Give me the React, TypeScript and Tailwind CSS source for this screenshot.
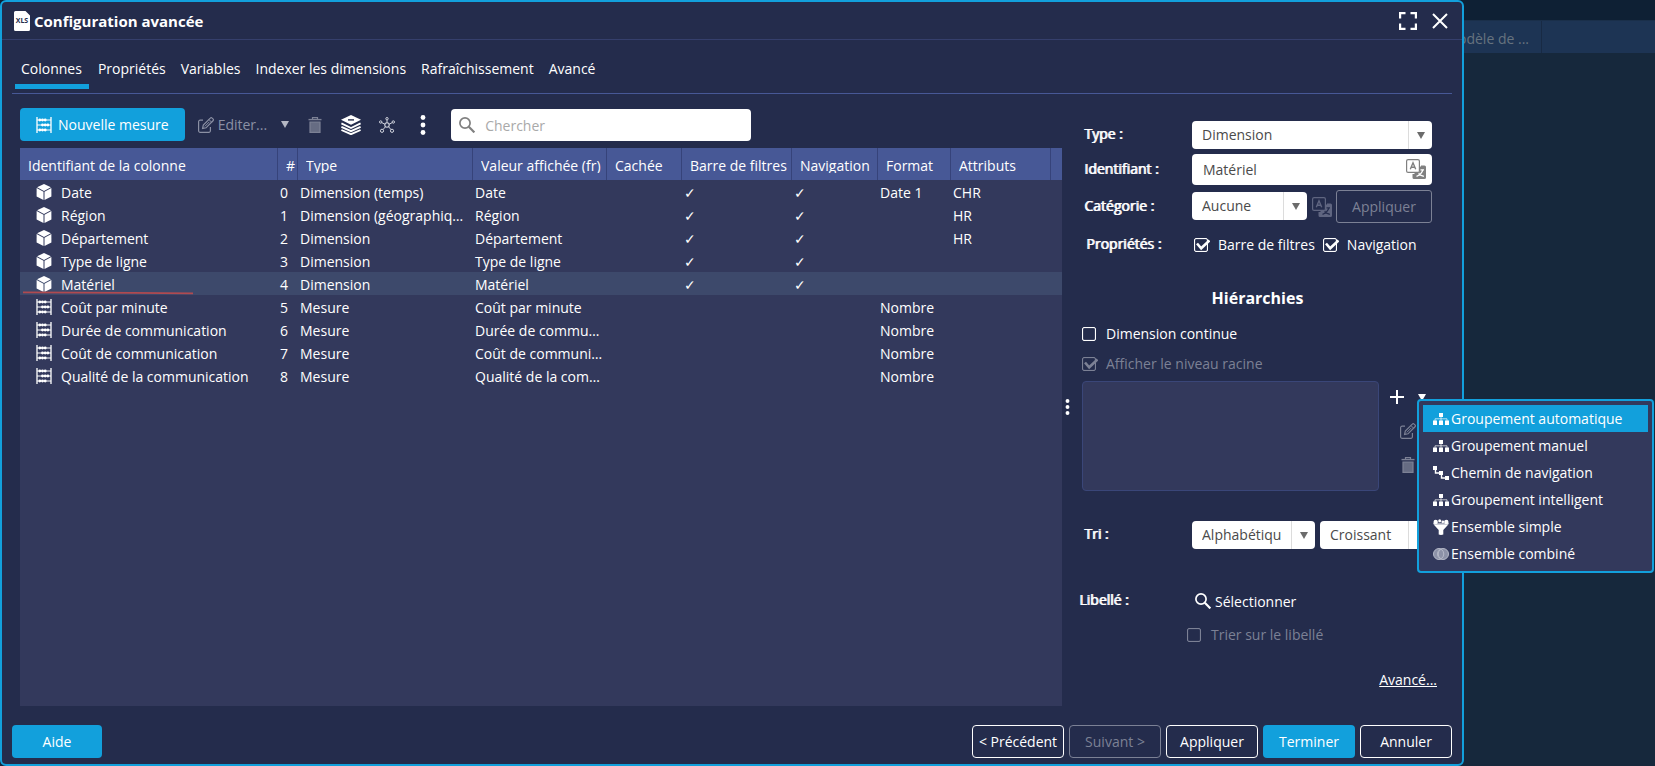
import clsx from "clsx"
import { FC, ReactNode, useState } from "react"

interface IIconProps {
  className?: string
}

interface IColumn {
  id: string
  type: string
  label: string
  isMeasure?: boolean
  format?: string
  attributes?: string
}

const TABS = [
  "Colonnes",
  "Propriétés",
  "Variables",
  "Indexer les dimensions",
  "Rafraîchissement",
  "Avancé",
]

const HEADERS = [
  { title: "Identifiant de la colonne", width: "w-[258px]" },
  { title: "#", width: "w-[20px]" },
  { title: "Type", width: "w-[175px]" },
  { title: "Valeur affichée (fr)", width: "w-[134px]" },
  { title: "Cachée", width: "w-[75px]" },
  { title: "Barre de filtres", width: "w-[110px]" },
  { title: "Navigation", width: "w-[86px]" },
  { title: "Format", width: "w-[73px]" },
  { title: "Attributs", width: "w-[100px]" },
]

const COLUMNS: IColumn[] = [
  { id: "Date", type: "Dimension (temps)", label: "Date", format: "Date 1", attributes: "CHR" },
  { id: "Région", type: "Dimension (géographique)", label: "Région", attributes: "HR" },
  { id: "Département", type: "Dimension", label: "Département", attributes: "HR" },
  { id: "Type de ligne", type: "Dimension", label: "Type de ligne" },
  { id: "Matériel", type: "Dimension", label: "Matériel" },
  { id: "Coût par minute", type: "Mesure", label: "Coût par minute", isMeasure: true, format: "Nombre" },
  { id: "Durée de communication", type: "Mesure", label: "Durée de communication", isMeasure: true, format: "Nombre" },
  { id: "Coût de communication", type: "Mesure", label: "Coût de communication", isMeasure: true, format: "Nombre" },
  { id: "Qualité de la communication", type: "Mesure", label: "Qualité de la communication", isMeasure: true, format: "Nombre" },
]

const AbacusIcon: FC<IIconProps> = ({ className }) => (
  <svg viewBox="0 0 16 16" className={className} fill="none" stroke="currentColor" aria-hidden="true">
    <path d="M1 0v16M15 0v16" strokeWidth="1.3" />
    <path d="M1 3h14M1 8h14M1 13h14" strokeWidth="1" />
    <path
      d="M3.800 3h.01M6.500 3h.01M9.200 3h.01M6.500 8h.01M9.200 8h.01M11.900 8h.01M3.800 13h.01M6.500 13h.01M9.200 13h.01"
      strokeWidth="2.800"
      strokeLinecap="round"
    />
  </svg>
)

const CubeIcon: FC<IIconProps> = ({ className }) => (
  <svg viewBox="0 0 16 16" className={className} fill="currentColor" aria-hidden="true">
    <path d="M8 0l6.900 3.300L8 7.100 1.100 3.300z" />
    <path d="M.6 4l6.900 3.800v8.200L.6 12.400z" />
    <path d="M15.400 4L8.500 7.800v8.200l6.900-3.600z" />
  </svg>
)

const XlsIcon: FC<IIconProps> = ({ className }) => (
  <svg viewBox="0 0 16 20" className={className} aria-hidden="true">
    <path d="M1.500 0h10L16 4.600v13.900a1.500 1.500 0 0 1-1.500 1.500h-13A1.500 1.500 0 0 1 0 18.500V1.500A1.500 1.500 0 0 1 1.500 0z" fill="#fff" />
    <text x="8" y="12.300" textAnchor="middle" fontSize="7" fontWeight="700" fill="#242c4c">
      XLS
    </text>
  </svg>
)

const EditIcon: FC<IIconProps> = ({ className }) => (
  <svg viewBox="0 0 16 16" className={className} fill="none" stroke="currentColor" strokeWidth="1.2" aria-hidden="true">
    <path d="M5 3.200H2.200A1.600 1.600 0 0 0 .6 4.800v9A1.600 1.600 0 0 0 2.200 15.400h8.600a1.600 1.600 0 0 0 1.600-1.600V10" />
    <path d="M4.600 11.400l.7-3.300 7-7a1.300 1.300 0 0 1 1.900 0l.8.8a1.300 1.300 0 0 1 0 1.900l-7 7z" />
    <path d="M11 2.600l2.600 2.600M6.800 9.400l4.600-4.600" strokeWidth="1" />
  </svg>
)

const TrashIcon: FC<IIconProps> = ({ className }) => (
  <svg viewBox="0 0 14 16" className={className} aria-hidden="true">
    <path d="M4.500 2V.6h5V2" fill="none" stroke="currentColor" strokeWidth="1.200" />
    <path d="M.5 2.600h13" stroke="currentColor" strokeWidth="1.400" />
    <path d="M2 5h10v10.300H2z" fill="currentColor" fillOpacity=".75" stroke="currentColor" strokeWidth="1.200" />
  </svg>
)

const LayersIcon: FC<IIconProps> = ({ className }) => (
  <svg viewBox="0 0 20 20" className={className} fill="none" aria-hidden="true">
    <path d="M10 0l10 4.800L10 9.800 0 4.800z" fill="currentColor" />
    <path d="M7 4.900h6" stroke="#242c4c" strokeWidth="1.400" />
    <path d="M.4 8.400L10 13l9.600-4.600M.4 11.800L10 16.200l9.600-4.400M.4 15L10 19.200l9.600-4.200" stroke="currentColor" strokeWidth="1.900" />
  </svg>
)

const NetworkIcon: FC<IIconProps> = ({ className }) => (
  <svg viewBox="0 0 16 16" className={className} fill="none" stroke="currentColor" aria-hidden="true">
    <circle cx="8" cy="8" r="2.200" strokeWidth="1.100" />
    <circle cx="8" cy="1.700" r="1.200" />
    <circle cx="14.300" cy="5" r="1.200" />
    <circle cx="1.700" cy="5" r="1.200" />
    <circle cx="13" cy="13.800" r="1.600" />
    <circle cx="3" cy="13.800" r="1.600" />
    <path d="M8 2.900v2.900M10.100 7.300l3.100-1.700M5.900 7.300L2.800 5.600M9.500 9.700l2.500 2.900M6.500 9.700L4 12.600" />
  </svg>
)

const SearchIcon: FC<IIconProps> = ({ className }) => (
  <svg viewBox="0 0 16 16" className={className} fill="none" stroke="currentColor" aria-hidden="true">
    <circle cx="6" cy="6" r="5.100" strokeWidth="1.700" />
    <path d="M9.800 9.800l5.600 5.600" strokeWidth="2.200" />
  </svg>
)

const DotsIcon: FC<IIconProps> = ({ className }) => (
  <svg viewBox="0 0 6 20" className={className} fill="currentColor" aria-hidden="true">
    <circle cx="3" cy="2.500" r="2.400" />
    <circle cx="3" cy="10" r="2.400" />
    <circle cx="3" cy="17.500" r="2.400" />
  </svg>
)

const ArrowIcon: FC<IIconProps> = ({ className }) => (
  <svg viewBox="0 0 8 7" className={className} fill="currentColor" aria-hidden="true">
    <path d="M0 0h8L4 7z" />
  </svg>
)

const TranslateIcon: FC<IIconProps & { glyphColor?: string }> = ({ className, glyphColor = "#fff" }) => (
  <svg viewBox="0 0 20 20" className={className} fill="none" stroke="currentColor" aria-hidden="true">
    <path
      d="M15 6.500h3.500A1.500 1.500 0 0 1 20 8v10.500a1.500 1.500 0 0 1-1.500 1.500H8a1.500 1.500 0 0 1-1.500-1.500V15H13.500A1.500 1.500 0 0 0 15 13.500z"
      fill="currentColor"
      stroke="none"
    />
    <path d="M13.500 7.500h4v8h-9v-2.200h5z" fill="currentColor" stroke="none" />
    <rect x=".6" y=".6" width="12.800" height="12.800" rx="1.500" strokeWidth="1.200" />
    <path d="M4.300 10.200L7 3.800l2.700 6.400M5.200 8.200h3.600" strokeWidth="1.400" />
    <path
      d="M14.500 10.800h3.500M16.800 10.800c-.6 2.800-2.600 5-6.300 6.500M12.500 14.500c1.500 1.300 3 2.300 5.400 2.800"
      stroke={glyphColor}
      strokeWidth="1.300"
    />
  </svg>
)

const GroupIcon: FC<IIconProps> = ({ className }) => (
  <svg viewBox="0 0 16 16" className={className} fill="currentColor" aria-hidden="true">
    <path d="M6 2h4v4H6zM0 9.500h4V14H0zM6 9.500h4V14H6zM12 9.500h4V14h-4z" />
    <path d="M8 6v4M2 10V7.800h12V10" fill="none" stroke="currentColor" strokeWidth=".9" opacity=".75" />
  </svg>
)

const PathIcon: FC<IIconProps> = ({ className }) => (
  <svg viewBox="0 0 16 16" className={className} fill="currentColor" aria-hidden="true">
    <path d="M0 1h4v4H0zM6 6h4v4H6zM12 11h4v4h-4z" />
    <path d="M2.500 5v3H7M8.500 10v3H12" fill="none" stroke="currentColor" strokeWidth="1.400" />
  </svg>
)

const FunnelIcon: FC<IIconProps> = ({ className }) => (
  <svg viewBox="0 0 16 16" className={className} fill="currentColor" aria-hidden="true">
    <path d="M.4 5.200h15.200L10.300 11V15.500L8 16l-2.300-.5V11z" />
    <circle cx="2.700" cy="3" r="2.200" />
    <circle cx="13.300" cy="3" r="2.200" />
    <circle cx="6.700" cy="1.800" r="1.500" />
    <circle cx="9.800" cy="2.800" r="1.400" />
    <path d="M0 4.300h16" stroke="currentColor" opacity=".7" />
  </svg>
)

const RingsIcon: FC<IIconProps> = ({ className }) => (
  <svg viewBox="0 0 16 16" className={className} fill="#8d92a8" stroke="#b5b9c8" aria-hidden="true">
    <circle cx="6" cy="8" r="5.500" />
    <circle cx="10" cy="8" r="5.500" />
    <path d="M8 3.200a5.500 5.500 0 0 1 0 9.600 5.500 5.500 0 0 1 0-9.600z" />
  </svg>
)

const MENU_ITEMS = [
  { title: "Groupement automatique", Icon: GroupIcon },
  { title: "Groupement manuel", Icon: GroupIcon },
  { title: "Chemin de navigation", Icon: PathIcon },
  { title: "Groupement intelligent", Icon: GroupIcon },
  { title: "Ensemble simple", Icon: FunnelIcon },
  { title: "Ensemble combiné", Icon: RingsIcon },
]

interface ICheckProps {
  label: string
  defaultChecked?: boolean
  disabled?: boolean
}

const Check: FC<ICheckProps> = ({ label, defaultChecked, disabled }) => (
  <label className={clsx("flex items-center gap-2", disabled && "text-[#7c8195]")}>
    <span className="grid w-4 h-4">
      <input
        type="checkbox"
        defaultChecked={defaultChecked}
        disabled={disabled}
        className="peer col-start-1 row-start-1 w-[14px] h-[14px] self-center appearance-none border border-current rounded-[2px] shadow-[inset_0_0_1px_currentColor]"
      />
      <svg
        viewBox="0 0 16 16"
        className="col-start-1 row-start-1 w-4 h-4 hidden peer-checked:block pointer-events-none"
        fill="none"
        stroke="currentColor"
        strokeWidth="2.600"
        aria-hidden="true"
      >
        <path d="M3 6.500l4.200 4.800L15.500 3.500" />
      </svg>
    </span>
    {label}
  </label>
)

interface ISelectProps {
  id?: string
  name: string
  options: string[]
  className?: string
}

const Select: FC<ISelectProps> = ({ id, name, options, className }) => (
  <div className={clsx("relative h-7 bg-white rounded text-[#4a4a4a]", className)}>
    <select id={id} aria-label={name} className="w-full h-full pl-[10px] pr-[34px] appearance-none rounded">
      {options.map((option) => (
        <option key={option}>{option}</option>
      ))}
    </select>
    <span className="absolute inset-y-0 right-0 w-6 border-l border-[#dcdcdc] flex items-center justify-center pointer-events-none">
      <ArrowIcon className="w-2 h-[7px] text-[#6b6b6b]" />
    </span>
  </div>
)

interface IFieldLabelProps {
  htmlFor?: string
  children: ReactNode
}

const FieldLabel: FC<IFieldLabelProps> = ({ htmlFor, children }) => (
  <label htmlFor={htmlFor} className="w-[110px] shrink-0 pl-[2px] pb-[2px] [text-shadow:1px_0_0_#fff]">
    {children}
  </label>
)

const ColumnsTable: FC = () => {
  const [selected, setSelected] = useState("Matériel")

  return (
    <div className="flex-1 min-w-0 bg-[#33395c]">
      <table className="w-full table-fixed border-separate border-spacing-0 text-left">
        <thead>
          <tr className="h-8 bg-[#475896]">
            {HEADERS.map(({ title, width }) => (
              <th key={title} className={clsx("p-0 pl-2 font-normal border-r border-[#36437a]", width)}>
                <span className="block h-4 mt-[2px] leading-[18px] overflow-hidden whitespace-nowrap">
                  {title}
                </span>
              </th>
            ))}
            <th className="p-0" />
          </tr>
        </thead>
        <tbody>
          {COLUMNS.map((column, index) => (
            <tr
              key={column.id}
              className={clsx("h-[23px] leading-[21px]", selected === column.id && "bg-[#3d496b]")}
              onClick={() => setSelected(column.id)}
            >
              <td className="relative p-0 pl-4">
                <div className="flex items-center gap-[9px]">
                  {column.isMeasure ? <AbacusIcon className="w-4 h-4" /> : <CubeIcon className="w-4 h-4" />}
                  <span className="pt-[2px]">{column.id}</span>
                </div>
                {column.id === "Matériel" && (
                  <svg viewBox="0 0 172 4" className="absolute left-[2px] bottom-0 w-[172px] h-1" aria-hidden="true">
                    <path d="M1 1.300l110 .5 60 .6" stroke="#b04a50" strokeWidth="1.800" fill="none" />
                  </svg>
                )}
              </td>
              <td className="p-0 pt-[2px] pl-[2px]">{index}</td>
              <td className="p-0 pt-[2px] pl-[2px] pr-[9px] truncate">{column.type}</td>
              <td className="p-0 pt-[2px] pl-[2px] pr-[2px] truncate">{column.label}</td>
              <td className="p-0" />
              <td className="p-0 pt-[2px] pl-[2px]">{!column.isMeasure && "✓"}</td>
              <td className="p-0 pt-[2px] pl-[2px]">{!column.isMeasure && "✓"}</td>
              <td className="p-0 pt-[2px] pl-[2px]">{column.format}</td>
              <td className="p-0 pt-[2px] pl-[2px]">{column.attributes}</td>
              <td className="p-0" />
            </tr>
          ))}
        </tbody>
      </table>
    </div>
  )
}

const HierarchyMenu: FC = () => (
  <div
    role="menu"
    className="absolute left-0 top-[18px] z-10 w-[237px] p-1 border-2 border-[#12a0dc] rounded bg-[#33395c]"
  >
    {MENU_ITEMS.map(({ title, Icon }, index) => (
      <button
        key={title}
        type="button"
        role="menuitem"
        className={clsx(
          "flex items-center gap-[2px] w-full h-[27px] pl-[10px] whitespace-nowrap",
          index === 0 && "bg-[#12a0dc]"
        )}
      >
        <Icon className="w-4 h-4" />
        {title}
      </button>
    ))}
  </div>
)

const PropertiesPanel: FC = () => (
  <div className="w-[400px] shrink-0 flex">
    <div className="w-3 flex items-center pl-[3px]">
      <DotsIcon className="w-[5px] h-4" />
    </div>
    <div className="flex-1 pt-[13px] pl-2 pr-[30px]">
      <div className="flex items-center">
        <FieldLabel htmlFor="type">Type :</FieldLabel>
        <Select id="type" name="Type" options={["Dimension", "Mesure"]} className="flex-1" />
      </div>
      <div className="flex items-center mt-[5px]">
        <FieldLabel htmlFor="identifier">Identifiant :</FieldLabel>
        <div className="relative flex-1">
          <input
            id="identifier"
            defaultValue="Matériel"
            className="block w-full h-[31px] pl-[11px] pr-8 bg-white rounded text-[#4a4a4a]"
          />
          <TranslateIcon className="absolute right-[6px] top-[5px] w-5 h-5 text-[#808080]" />
        </div>
      </div>
      <div className="flex items-center mt-[5px]">
        <FieldLabel htmlFor="category">Catégorie :</FieldLabel>
        <Select id="category" name="Catégorie" options={["Aucune"]} className="w-[115px] mb-px" />
        <TranslateIcon className="w-5 h-5 ml-[5px] text-[#5f6580]" glyphColor="#242c4c" />
        <button
          type="button"
          disabled
          className="flex-1 h-[33px] ml-1 border border-[#7c8195] rounded-[3px] text-[#7c8195]"
        >
          Appliquer
        </button>
      </div>
      <div className="flex items-center h-6 mt-[10px]">
        <span className="w-[112px] shrink-0 pl-1 pb-[2px] [text-shadow:1px_0_0_#fff]">Propriétés :</span>
        <div className="flex gap-[8px] whitespace-nowrap">
          <Check label="Barre de filtres" defaultChecked />
          <Check label="Navigation" defaultChecked />
        </div>
      </div>

      <h2 className="h-6 mt-[29px] pl-px text-center font-bold text-base leading-6">Hiérarchies</h2>
      <div className="flex items-center h-6 mt-3">
        <Check label="Dimension continue" />
      </div>
      <div className="flex items-center h-6 mt-[6px]">
        <Check label="Afficher le niveau racine" defaultChecked disabled />
      </div>
      <div className="flex mt-[5px]">
        <div className="w-[297px] h-[110px] shrink-0 border border-[#3a4678] rounded bg-[#33395c]" />
        <div className="pl-[10px]">
          <div className="relative flex items-center h-8 gap-3">
            <button type="button" aria-label="Ajouter" className="w-4">
              <svg viewBox="0 0 16 16" className="w-4 h-4" stroke="currentColor" strokeWidth="2" aria-hidden="true">
                <path d="M8 1v14M1 8h14" />
              </svg>
            </button>
            <div className="relative h-8">
              <button type="button" aria-label="Plus d'options" className="block w-[10px] h-8">
                <ArrowIcon className="w-2 h-[7px] mx-auto" />
              </button>
              <HierarchyMenu />
            </div>
          </div>
          <button type="button" aria-label="Modifier" disabled className="flex items-center h-9 pl-[11px] text-[#7c8195]">
            <EditIcon className="w-4 h-4" />
          </button>
          <button type="button" aria-label="Supprimer" disabled className="flex items-center h-8 pl-3 text-[#7c8195]">
            <TrashIcon className="w-[14px] h-4" />
          </button>
        </div>
      </div>

      <div className="flex items-center mt-[30px]">
        <FieldLabel htmlFor="sort">Tri :</FieldLabel>
        <Select id="sort" name="Tri" options={["Alphabétique"]} className="w-[123px]" />
        <Select name="Ordre" options={["Croissant", "Décroissant"]} className="flex-1 ml-[5px]" />
      </div>
      <div className="flex items-center h-6 mt-10">
        <span className="w-[113px] -ml-[3px] pb-[2px] shrink-0 [text-shadow:1px_0_0_#fff]">Libellé :</span>
        <button type="button" className="flex items-center gap-1 pl-[3px]">
          <SearchIcon className="w-4 h-4" />
          <span className="pt-px">Sélectionner</span>
        </button>
      </div>
      <div className="flex items-center h-6 mt-[10px] pl-[105px]">
        <Check label="Trier sur le libellé" disabled />
      </div>
      <div className="flex justify-end h-6 mt-[21px] -mr-[5px]">
        <a href="#avance" className="underline leading-6">
          Avancé...
        </a>
      </div>
    </div>
  </div>
)

const Toolbar: FC = () => (
  <div className="flex items-center h-[33px] mb-[7px]">
    <button type="button" className="flex items-center gap-[6px] h-full px-4 bg-[#12a0dc] rounded">
      <AbacusIcon className="w-4 h-4" />
      Nouvelle mesure
    </button>
    <button type="button" disabled className="flex items-center gap-1 ml-[13px] text-[#8b90a4]">
      <EditIcon className="w-4 h-4" />
      <span className="pt-px">Editer...</span>
      <ArrowIcon className="w-2 h-[7px] ml-[10px] text-[#b4b7c4]" />
    </button>
    <button type="button" aria-label="Supprimer" disabled className="ml-[19px] text-[#7c8195]">
      <TrashIcon className="w-[14px] h-4" />
    </button>
    <button type="button" aria-label="Niveaux" className="ml-[19px]">
      <LayersIcon className="w-5 h-5" />
    </button>
    <button type="button" aria-label="Relations" className="ml-[18px] text-[#d0d3dd]">
      <NetworkIcon className="w-4 h-4" />
    </button>
    <button type="button" aria-label="Plus" className="ml-[25px]">
      <DotsIcon className="w-[6px] h-5" />
    </button>
    <div className="relative ml-[25px] mt-px">
      <input
        type="search"
        aria-label="Chercher"
        placeholder="Chercher"
        className="block w-[300px] h-8 pl-[34px] pr-2 bg-white rounded text-[#4a4a4a] placeholder:text-[#a9a9a9]"
      />
      <SearchIcon className="absolute left-2 top-2 w-4 h-4 text-[#808080]" />
    </div>
  </div>
)

const App: FC = () => {
  const [activeTab, setActiveTab] = useState("Colonnes")

  return (
    <div className="relative min-h-screen overflow-hidden bg-[#16283c] font-['Open_Sans','Noto_Sans',sans-serif] text-sm text-white">
      <div className="absolute inset-x-0 top-0 pt-5 bg-[#0e2034]">
        <div className="flex justify-end h-[33px] border-t border-[#1a2f4a] bg-[#1d3454] text-[#66737f]">
          <span className="pr-3 leading-9 border-r border-[#182a44]">Modèle de ...</span>
          <span className="w-[113px]" />
        </div>
      </div>

      <div
        role="dialog"
        aria-label="Configuration avancée"
        className="relative flex flex-col min-h-screen mr-[191px] border-2 border-[#12a0dc] rounded-md bg-[#242c4c]"
      >
        <header className="flex items-center h-[38px] pt-px pl-3 pr-[14px] border-b border-[#353f6c]">
          <XlsIcon className="w-4 h-5" />
          <h1 className="ml-1 pt-px text-[15px] font-bold">Configuration avancée</h1>
          <button type="button" aria-label="Agrandir" className="ml-auto">
            <svg viewBox="0 0 18 18" className="w-[18px] h-[18px]" fill="none" stroke="currentColor" strokeWidth="2.200" aria-hidden="true">
              <path d="M1.100 6.500V1.100h5.400M11.500 1.100h5.400v5.400M16.900 11.500v5.400h-5.400M6.500 16.900H1.100v-5.400" />
            </svg>
          </button>
          <button type="button" aria-label="Fermer" className="ml-[15px]">
            <svg viewBox="0 0 16 16" className="w-4 h-4" stroke="currentColor" strokeWidth="2" aria-hidden="true">
              <path d="M1 1l14 14M15 1L1 15" />
            </svg>
          </button>
        </header>

        <nav className="flex gap-[3px] h-[54px] mx-[10px] pl-[3px] pt-[14px] pb-1 border-b border-[#475896]">
          {TABS.map((tab) => (
            <button
              key={tab}
              type="button"
              onClick={() => setActiveTab(tab)}
              className={clsx(
                "px-[6px] pb-px border-b-[5px]",
                activeTab === tab ? "pr-[7px] border-[#12a0dc]" : "border-transparent"
              )}
            >
              {tab}
            </button>
          ))}
        </nav>

        <main className="flex flex-1 pt-[14px] pl-[18px]">
          <div className="flex flex-col flex-1 min-w-0">
            <Toolbar />
            <ColumnsTable />
          </div>
          <PropertiesPanel />
        </main>

        <footer className="flex gap-[5px] mt-[19px] mb-[6px] px-[10px]">
          <button type="button" className="w-[90px] h-[33px] mr-auto bg-[#12a0dc] rounded">
            Aide
          </button>
          <button type="button" className="w-[92px] h-[33px] border border-white rounded">
            &lt; Précédent
          </button>
          <button type="button" disabled className="w-[92px] h-[33px] border border-[#7c8195] rounded text-[#7c8195]">
            Suivant &gt;
          </button>
          <button type="button" className="w-[92px] h-[33px] border border-white rounded">
            Appliquer
          </button>
          <button type="button" className="w-[92px] h-[33px] bg-[#12a0dc] rounded">
            Terminer
          </button>
          <button type="button" className="w-[92px] h-[33px] border border-white rounded">
            Annuler
          </button>
        </footer>
      </div>
    </div>
  )
}

export default App
